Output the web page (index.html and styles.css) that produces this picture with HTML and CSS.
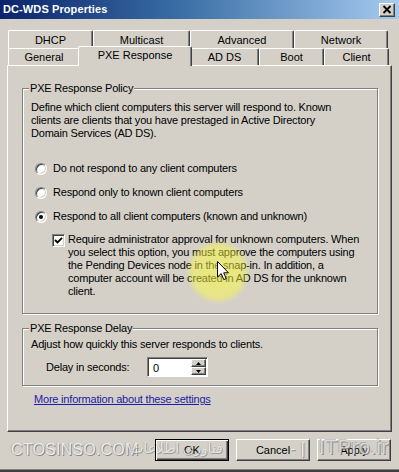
FILE: index.html
```html
<!DOCTYPE html>
<html>
<head>
<meta charset="utf-8">
<title>DC-WDS Properties</title>
<link rel="stylesheet" href="styles.css">
</head>
<body>
<div class="window">
  <div class="titlebar">
    <span class="title">DC-WDS Properties</span>
    <span class="close"><svg width="10" height="9" viewBox="0 0 10 9"><path d="M1.5 1 L8.5 8 M8.5 1 L1.5 8" stroke="#000" stroke-width="1.8" fill="none"/></svg></span>
  </div>
  <div class="tabs">
    <div class="tabrow row1">
      <div class="tab t-dhcp">DHCP</div>
      <div class="tab t-multicast">Multicast</div>
      <div class="tab t-advanced">Advanced</div>
      <div class="tab t-network">Network</div>
    </div>
    <div class="tabrow row2">
      <div class="tab t-general">General</div>
      <div class="tab t-pxe sel">PXE Response</div>
      <div class="tab t-adds">AD DS</div>
      <div class="tab t-boot">Boot</div>
      <div class="tab t-client">Client</div>
    </div>
  </div>
  <div class="page">
    <fieldset class="group group1">
      <legend>PXE Response Policy</legend>
      <p class="desc">Define which client computers this server will respond to. Known<br>clients are clients that you have prestaged in Active Directory<br>Domain Services (AD DS).</p>
      <div class="opt first"><span class="radio"></span><span>Do not respond to any client computers</span></div>
      <div class="opt"><span class="radio"></span><span>Respond only to known client computers</span></div>
      <div class="opt"><span class="radio on"></span><span>Respond to all client computers (known and unknown)</span></div>
      <div class="chk-row">
        <span class="check"><svg width="9" height="9" viewBox="0 0 9 9"><path d="M1 4 L3.5 6.5 L8 1.8" stroke="#000" stroke-width="1.9" fill="none"/></svg></span>
        <span class="chk-text">Require administrator approval for unknown computers. When<br>you select this option, you must approve the computers using<br>the Pending Devices node in the snap-in. In addition, a<br>computer account will be created in AD DS for the unknown<br>client.</span>
      </div>
    </fieldset>
    <fieldset class="group group2">
      <legend>PXE Response Delay</legend>
      <p class="desc">Adjust how quickly this server responds to clients.</p>
      <div class="delay-row">
        <span class="delay-label">Delay in seconds:</span>
        <span class="spin">
          <span class="spin-val">0</span>
          <span class="arrows">
            <span class="arr"><svg width="5" height="3" viewBox="0 0 5 3"><path d="M2.5 0 L5 3 L0 3 Z" fill="#000"/></svg></span>
            <span class="arr"><svg width="5" height="3" viewBox="0 0 5 3"><path d="M0 0 L5 0 L2.5 3 Z" fill="#000"/></svg></span>
          </span>
        </span>
      </div>
    </fieldset>
    <a class="more" href="#">More information about these settings</a>
  </div>
  <div class="buttons">
    <span class="btn default">OK</span>
    <span class="btn">Cancel</span>
    <span class="btn">Apply</span>
  </div>
</div>
<div class="highlight"></div>
<svg class="cursor" width="13" height="20" viewBox="0 0 13 20"><path d="M0.5 0.5 L0.5 16 L4.2 12.6 L6.8 18.6 L9.2 17.6 L6.7 11.8 L11.5 11.8 Z" fill="#fff" stroke="#000" stroke-width="1"/></svg>
<div class="watermark">
  <span class="wm-site">CTOSINSO.COM</span>
  <span class="wm-fa">فناوری اطلاعات</span>
  <span class="wm-dash">- |</span>
  <span class="wm-itpro">ITPro.ir</span>
</div>
</body>
</html>
```
FILE: styles.css
```css
* { box-sizing: border-box; }
html, body { margin: 0; padding: 0; }
body {
  width: 399px;
  height: 472px;
  overflow: hidden;
  position: relative;
  background: #d4d0c8;
  font-family: "Liberation Sans", Arial, sans-serif;
  font-size: 11px;
  line-height: 13px;
  letter-spacing: -0.2px;
  color: #000;
}
.window {
  height: 472px;
  display: flex;
  flex-direction: column;
  border-bottom: 2px solid #404040;
  box-shadow: inset 0 -1px #808080;
}
.titlebar {
  height: 19px;
  flex: none;
  background: linear-gradient(to right, #0a246a 0%, #3a6ea5 45%, #a6caf0 100%);
  display: flex;
  align-items: center;
  justify-content: space-between;
  padding: 0 4px 0 3px;
  color: #fff;
  font-weight: bold;
  font-size: 11px;
  letter-spacing: 0.1px;
}
.close {
  width: 16px;
  height: 14px;
  background: #d4d0c8;
  border: 1px solid;
  border-color: #fff #404040 #404040 #fff;
  box-shadow: inset -1px -1px #808080;
  display: flex;
  align-items: center;
  justify-content: center;
}
.tabs {
  margin-top: 11px;
  padding-left: 8px;
  display: flex;
  flex-direction: column;
  flex: none;
}
.tabrow { display: flex; }
.row1 { height: 18px; }
.row2 { height: 17px; position: relative; z-index: 1; }
.tab {
  height: 100%;
  display: flex;
  align-items: center;
  justify-content: center;
  background: #d4d0c8;
  border-top: 1px solid #fff;
  border-left: 1px solid #fff;
  border-right: 1px solid #404040;
  box-shadow: inset -1px 0 #808080;
  border-radius: 2px 2px 0 0;
  padding-top: 1px;
  letter-spacing: 0;
}
.t-dhcp { width: 85px; }
.t-multicast { width: 97px; }
.t-advanced { width: 104px; }
.t-network { width: 94px; }
.t-general { width: 72px; }
.t-pxe { width: 114px; }
.t-adds { width: 69px; }
.t-boot { width: 65px; }
.t-client { width: 65px; }
.tab.sel {
  height: 20px;
  margin: -2px -2px 0 -2px;
  position: relative;
  z-index: 2;
  padding-top: 0;
  padding-bottom: 3px;
}
.page {
  margin-left: 7px;
  width: 385px;
  height: 367px;
  flex: none;
  border-top: 1px solid #fff;
  border-left: 1px solid #fff;
  border-right: 1px solid #404040;
  border-bottom: 1px solid #404040;
  box-shadow: inset -1px -1px #808080;
  padding: 16px 0 0 14px;
}
.group {
  margin: 0;
  width: 356px;
  min-width: 0;
  border: 1px solid #808080;
  box-shadow: inset 1px 1px #fff, 1px 1px #fff;
  padding: 6px 8px 15px 8px;
}
.group legend {
  padding: 0 1px;
  margin-left: -2px;
  background: #d4d0c8;
  line-height: 13px;
}
.desc { margin: 0; white-space: nowrap; }
.opt {
  display: flex;
  align-items: center;
  height: 13px;
  margin-top: 11px;
  padding-left: 4px;
  white-space: nowrap;
}
.opt.first { margin-top: 22px; }
.radio {
  width: 12px;
  height: 12px;
  margin-right: 6px;
  border-radius: 50%;
  background: #fff;
  border: 1px solid;
  border-color: #808080 #fff #fff #808080;
  box-shadow: inset 1px 1px #404040, inset -1px -1px #d4d0c8;
  display: flex;
  align-items: center;
  justify-content: center;
  flex: none;
}
.radio.on::after {
  content: "";
  width: 4px;
  height: 4px;
  border-radius: 50%;
  background: #000;
}
.chk-row {
  display: flex;
  align-items: flex-start;
  margin-top: 10px;
  padding-left: 21px;
  white-space: nowrap;
}
.check {
  width: 13px;
  height: 13px;
  margin-top: 1px;
  margin-right: 3px;
  flex: none;
  background: #fff;
  border: 1px solid;
  border-color: #808080 #fff #fff #808080;
  box-shadow: inset 1px 1px #404040, inset -1px -1px #d4d0c8;
  display: flex;
  align-items: center;
  justify-content: center;
}
.group2 {
  margin-top: 8px;
  padding: 3px 8px 8px 8px;
}
.delay-row {
  display: flex;
  align-items: center;
  height: 20px;
  margin-top: 6px;
  padding-left: 15px;
}
.delay-label { width: 101px; }
.spin {
  display: flex;
  width: 61px;
  height: 20px;
  background: #fff;
  border: 1px solid;
  border-color: #808080 #fff #fff #808080;
  box-shadow: inset 1px 1px #404040;
  padding: 1px;
}
.spin-val { flex: 1; padding-left: 4px; padding-top: 3px; }
.arrows {
  width: 15px;
  display: flex;
  flex-direction: column;
}
.arr {
  flex: 1;
  background: #d4d0c8;
  border: 1px solid;
  border-color: #fff #404040 #404040 #fff;
  box-shadow: inset -1px -1px #808080;
  display: flex;
  align-items: center;
  justify-content: center;
}
.more {
  display: inline-block;
  margin: 7px 0 0 12px;
  color: #1c1ca8;
  text-decoration: underline;
}
.buttons {
  display: flex;
  justify-content: flex-end;
  gap: 7px;
  margin-top: 7px;
  padding-right: 8px;
  flex: none;
}
.btn {
  width: 74px;
  height: 22px;
  display: flex;
  align-items: center;
  justify-content: center;
  background: #d4d0c8;
  border: 1px solid;
  border-color: #fff #404040 #404040 #fff;
  box-shadow: inset -1px -1px #808080;
  letter-spacing: 0;
}
.btn.default {
  border-color: #000;
  box-shadow: inset 1px 1px #fff, inset -1px -1px #404040, inset -2px -2px #808080;
}
.highlight {
  position: absolute;
  left: 186px;
  top: 240px;
  width: 64px;
  height: 64px;
  border-radius: 50%;
  background: radial-gradient(circle, rgba(255, 255, 60, 0.55) 0%, rgba(255, 255, 60, 0.45) 55%, rgba(255, 255, 60, 0) 72%);
  pointer-events: none;
}
.cursor {
  position: absolute;
  left: 217px;
  top: 261px;
}
.watermark {
  position: absolute;
  left: 0;
  top: 440px;
  width: 399px;
  height: 24px;
  font-family: "Liberation Sans", "DejaVu Sans", sans-serif;
  letter-spacing: 0;
  color: rgba(250, 250, 250, 0.85);
  text-shadow: 1px 1px 0 rgba(90, 90, 90, 0.6), -1px 0 0 rgba(120, 120, 120, 0.4);
  pointer-events: none;
}
.watermark span { position: absolute; white-space: nowrap; }
.wm-site { left: 11px; top: 3px; font-size: 16px; letter-spacing: 0.2px; }
.wm-fa { left: 130px; top: 2px; font-size: 14px; opacity: 0.7; }
.wm-dash { left: 290px; top: 2px; font-size: 17px; }
.wm-itpro { left: 319px; top: 1px; font-size: 20px; letter-spacing: 0.5px; color: rgba(236, 236, 236, 0.7); text-shadow: 1px 1px 0 rgba(110, 110, 110, 0.7), -1px -1px 0 rgba(140, 140, 140, 0.5); }
```
